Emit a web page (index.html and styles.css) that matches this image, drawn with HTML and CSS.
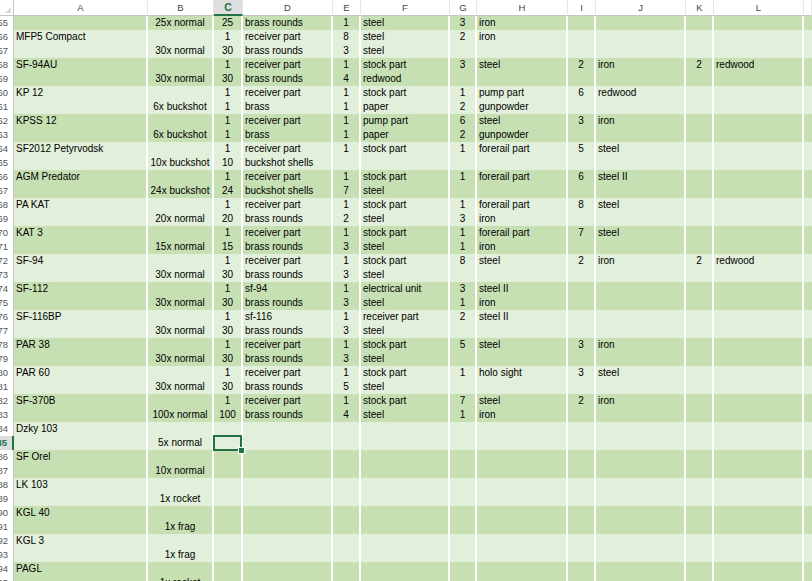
FILE: index.html
```html
<!DOCTYPE html>
<html lang="en">
<head>
  <meta charset="UTF-8">
  <meta name="viewport" content="width=device-width, initial-scale=1.0">
  <title>Weapon recipes</title>
  <link rel="stylesheet" href="styles.css">
</head>
<body>
  <div class="sheet" id="sheet">
    <div class="row head">
      <div class="corner"></div>
      <div class="col">A</div>
      <div class="col">B</div>
      <div class="col active">C</div>
      <div class="col">D</div>
      <div class="col">E</div>
      <div class="col">F</div>
      <div class="col">G</div>
      <div class="col">H</div>
      <div class="col">I</div>
      <div class="col">J</div>
      <div class="col">K</div>
      <div class="col">L</div>
      <div class="col"></div>
    </div>
  </div>

  <script>
    // name, ammo, qty, part, then qty/material pairs
    const rows = [
      ['', '25x normal', 25, 'brass rounds', 1, 'steel', 3, 'iron'],
      ['MFP5 Compact', '', 1, 'receiver part', 8, 'steel', 2, 'iron'],
      ['', '30x normal', 30, 'brass rounds', 3, 'steel'],
      ['SF-94AU', '', 1, 'receiver part', 1, 'stock part', 3, 'steel', 2, 'iron', 2, 'redwood'],
      ['', '30x normal', 30, 'brass rounds', 4, 'redwood'],
      ['KP 12', '', 1, 'receiver part', 1, 'stock part', 1, 'pump part', 6, 'redwood'],
      ['', '6x buckshot', 1, 'brass', 1, 'paper', 2, 'gunpowder'],
      ['KPSS 12', '', 1, 'receiver part', 1, 'pump part', 6, 'steel', 3, 'iron'],
      ['', '6x buckshot', 1, 'brass', 1, 'paper', 2, 'gunpowder'],
      ['SF2012 Petyrvodsk', '', 1, 'receiver part', 1, 'stock part', 1, 'forerail part', 5, 'steel'],
      ['', '10x buckshot', 10, 'buckshot shells'],
      ['AGM Predator', '', 1, 'receiver part', 1, 'stock part', 1, 'forerail part', 6, 'steel II'],
      ['', '24x buckshot', 24, 'buckshot shells', 7, 'steel'],
      ['PA KAT', '', 1, 'receiver part', 1, 'stock part', 1, 'forerail part', 8, 'steel'],
      ['', '20x normal', 20, 'brass rounds', 2, 'steel', 3, 'iron'],
      ['KAT 3', '', 1, 'receiver part', 1, 'stock part', 1, 'forerail part', 7, 'steel'],
      ['', '15x normal', 15, 'brass rounds', 3, 'steel', 1, 'iron'],
      ['SF-94', '', 1, 'receiver part', 1, 'stock part', 8, 'steel', 2, 'iron', 2, 'redwood'],
      ['', '30x normal', 30, 'brass rounds', 3, 'steel'],
      ['SF-112', '', 1, 'sf-94', 1, 'electrical unit', 3, 'steel II'],
      ['', '30x normal', 30, 'brass rounds', 3, 'steel', 1, 'iron'],
      ['SF-116BP', '', 1, 'sf-116', 1, 'receiver part', 2, 'steel II'],
      ['', '30x normal', 30, 'brass rounds', 3, 'steel'],
      ['PAR 38', '', 1, 'receiver part', 1, 'stock part', 5, 'steel', 3, 'iron'],
      ['', '30x normal', 30, 'brass rounds', 3, 'steel'],
      ['PAR 60', '', 1, 'receiver part', 1, 'stock part', 1, 'holo sight', 3, 'steel'],
      ['', '30x normal', 30, 'brass rounds', 5, 'steel'],
      ['SF-370B', '', 1, 'receiver part', 1, 'stock part', 7, 'steel', 2, 'iron'],
      ['', '100x normal', 100, 'brass rounds', 4, 'steel', 1, 'iron'],
      ['Dzky 103'],
      ['', '5x normal'],
      ['SF Orel'],
      ['', '10x normal'],
      ['LK 103'],
      ['', '1x rocket'],
      ['KGL 40'],
      ['', '1x frag'],
      ['KGL 3'],
      ['', '1x frag'],
      ['PAGL'],
      ['', '1x rocket']
    ];

    const firstRow = 55;
    const activeRow = 85;
    const align = ['left', 'mid', 'mid', 'left', 'mid', 'left', 'mid', 'left', 'mid', 'left', 'mid', 'left', 'left'];
    const sheet = document.getElementById('sheet');

    rows.forEach((data, i) => {
      const n = firstRow + i;
      const band = (((Math.floor((n - 56) / 2)) % 2) + 2) % 2 === 0 ? 'light' : 'dark';
      const row = document.createElement('div');
      row.className = 'row ' + band;

      const num = document.createElement('div');
      num.className = 'num' + (n === activeRow ? ' active' : '');
      num.textContent = n;
      row.appendChild(num);

      for (let c = 0; c < 13; c++) {
        const cell = document.createElement('div');
        cell.className = 'cell ' + align[c];
        if (n === activeRow && c === 2) cell.classList.add('sel');
        const v = data[c];
        cell.textContent = v === undefined ? '' : v;
        row.appendChild(cell);
      }
      sheet.appendChild(row);
    });
  </script>
</body>
</html>
```

FILE: styles.css
```css
:root {
  --cols: 14px 134px 66px 29px 90px 28px 89px 27px 91px 28px 90px 28px 90px 1fr;
  --band-dark: #c6e0b4;
  --band-light: #e2efda;
  --excel: #217346;
}
body {
  margin: 0;
  background: #fff;
  color: #000;
  font-family: "Liberation Sans", Arial, sans-serif;
  font-size: 10px;
  overflow: hidden;
  height: 100vh;
}
.sheet {
  width: 100%;
}
.row {
  display: grid;
  grid-template-columns: var(--cols);
}
.head {
  height: 16px;
}
.corner {
  position: relative;
  border-bottom: 1px solid #c6c6c6;
  border-right: 1px solid #c6c6c6;
  box-sizing: border-box;
}
.corner::after {
  content: '';
  position: absolute;
  right: 2px;
  bottom: 2px;
  border-style: solid;
  border-width: 0 0 6px 6px;
  border-color: transparent transparent #dcdcdc transparent;
}
.col {
  box-sizing: border-box;
  height: 16px;
  line-height: 15px;
  text-align: center;
  font-size: 9.5px;
  color: #444;
  border-bottom: 1px solid #c6c6c6;
  border-right: 1px solid #e6e6e6;
}
.col.active {
  background: #dedede;
  color: var(--excel);
  font-weight: bold;
  font-size: 10.5px;
  line-height: 14px;
  border-bottom: 2px solid var(--excel);
}
.num {
  box-sizing: border-box;
  height: 14px;
  line-height: 14px;
  padding-right: 5px;
  direction: rtl;
  white-space: nowrap;
  overflow: hidden;
  color: #555;
  font-size: 9.5px;
  background: #fff;
  border-right: 1px solid #c6c6c6;
}
.num.active {
  background: #dedede;
  color: var(--excel);
  font-weight: bold;
  border-right: 2px solid var(--excel);
}
.cell {
  box-sizing: border-box;
  height: 14px;
  line-height: 14px;
  padding: 0 2px;
  white-space: nowrap;
  overflow: hidden;
  border-right: 2px solid #fff;
}
.cell:last-child {
  border-right: none;
}
.dark .cell {
  background: var(--band-dark);
}
.light .cell {
  background: var(--band-light);
}
.left {
  text-align: left;
}
.mid {
  text-align: center;
}
.cell.sel {
  position: relative;
  overflow: visible;
}
.cell.sel::after {
  content: '';
  position: absolute;
  left: -1px;
  right: -1px;
  top: -1px;
  bottom: -1px;
  border: 2px solid var(--excel);
  z-index: 2;
}
.cell.sel::before {
  content: '';
  position: absolute;
  right: -4px;
  bottom: -4px;
  width: 5px;
  height: 5px;
  background: var(--excel);
  border: 1px solid #fff;
  z-index: 3;
}
```
